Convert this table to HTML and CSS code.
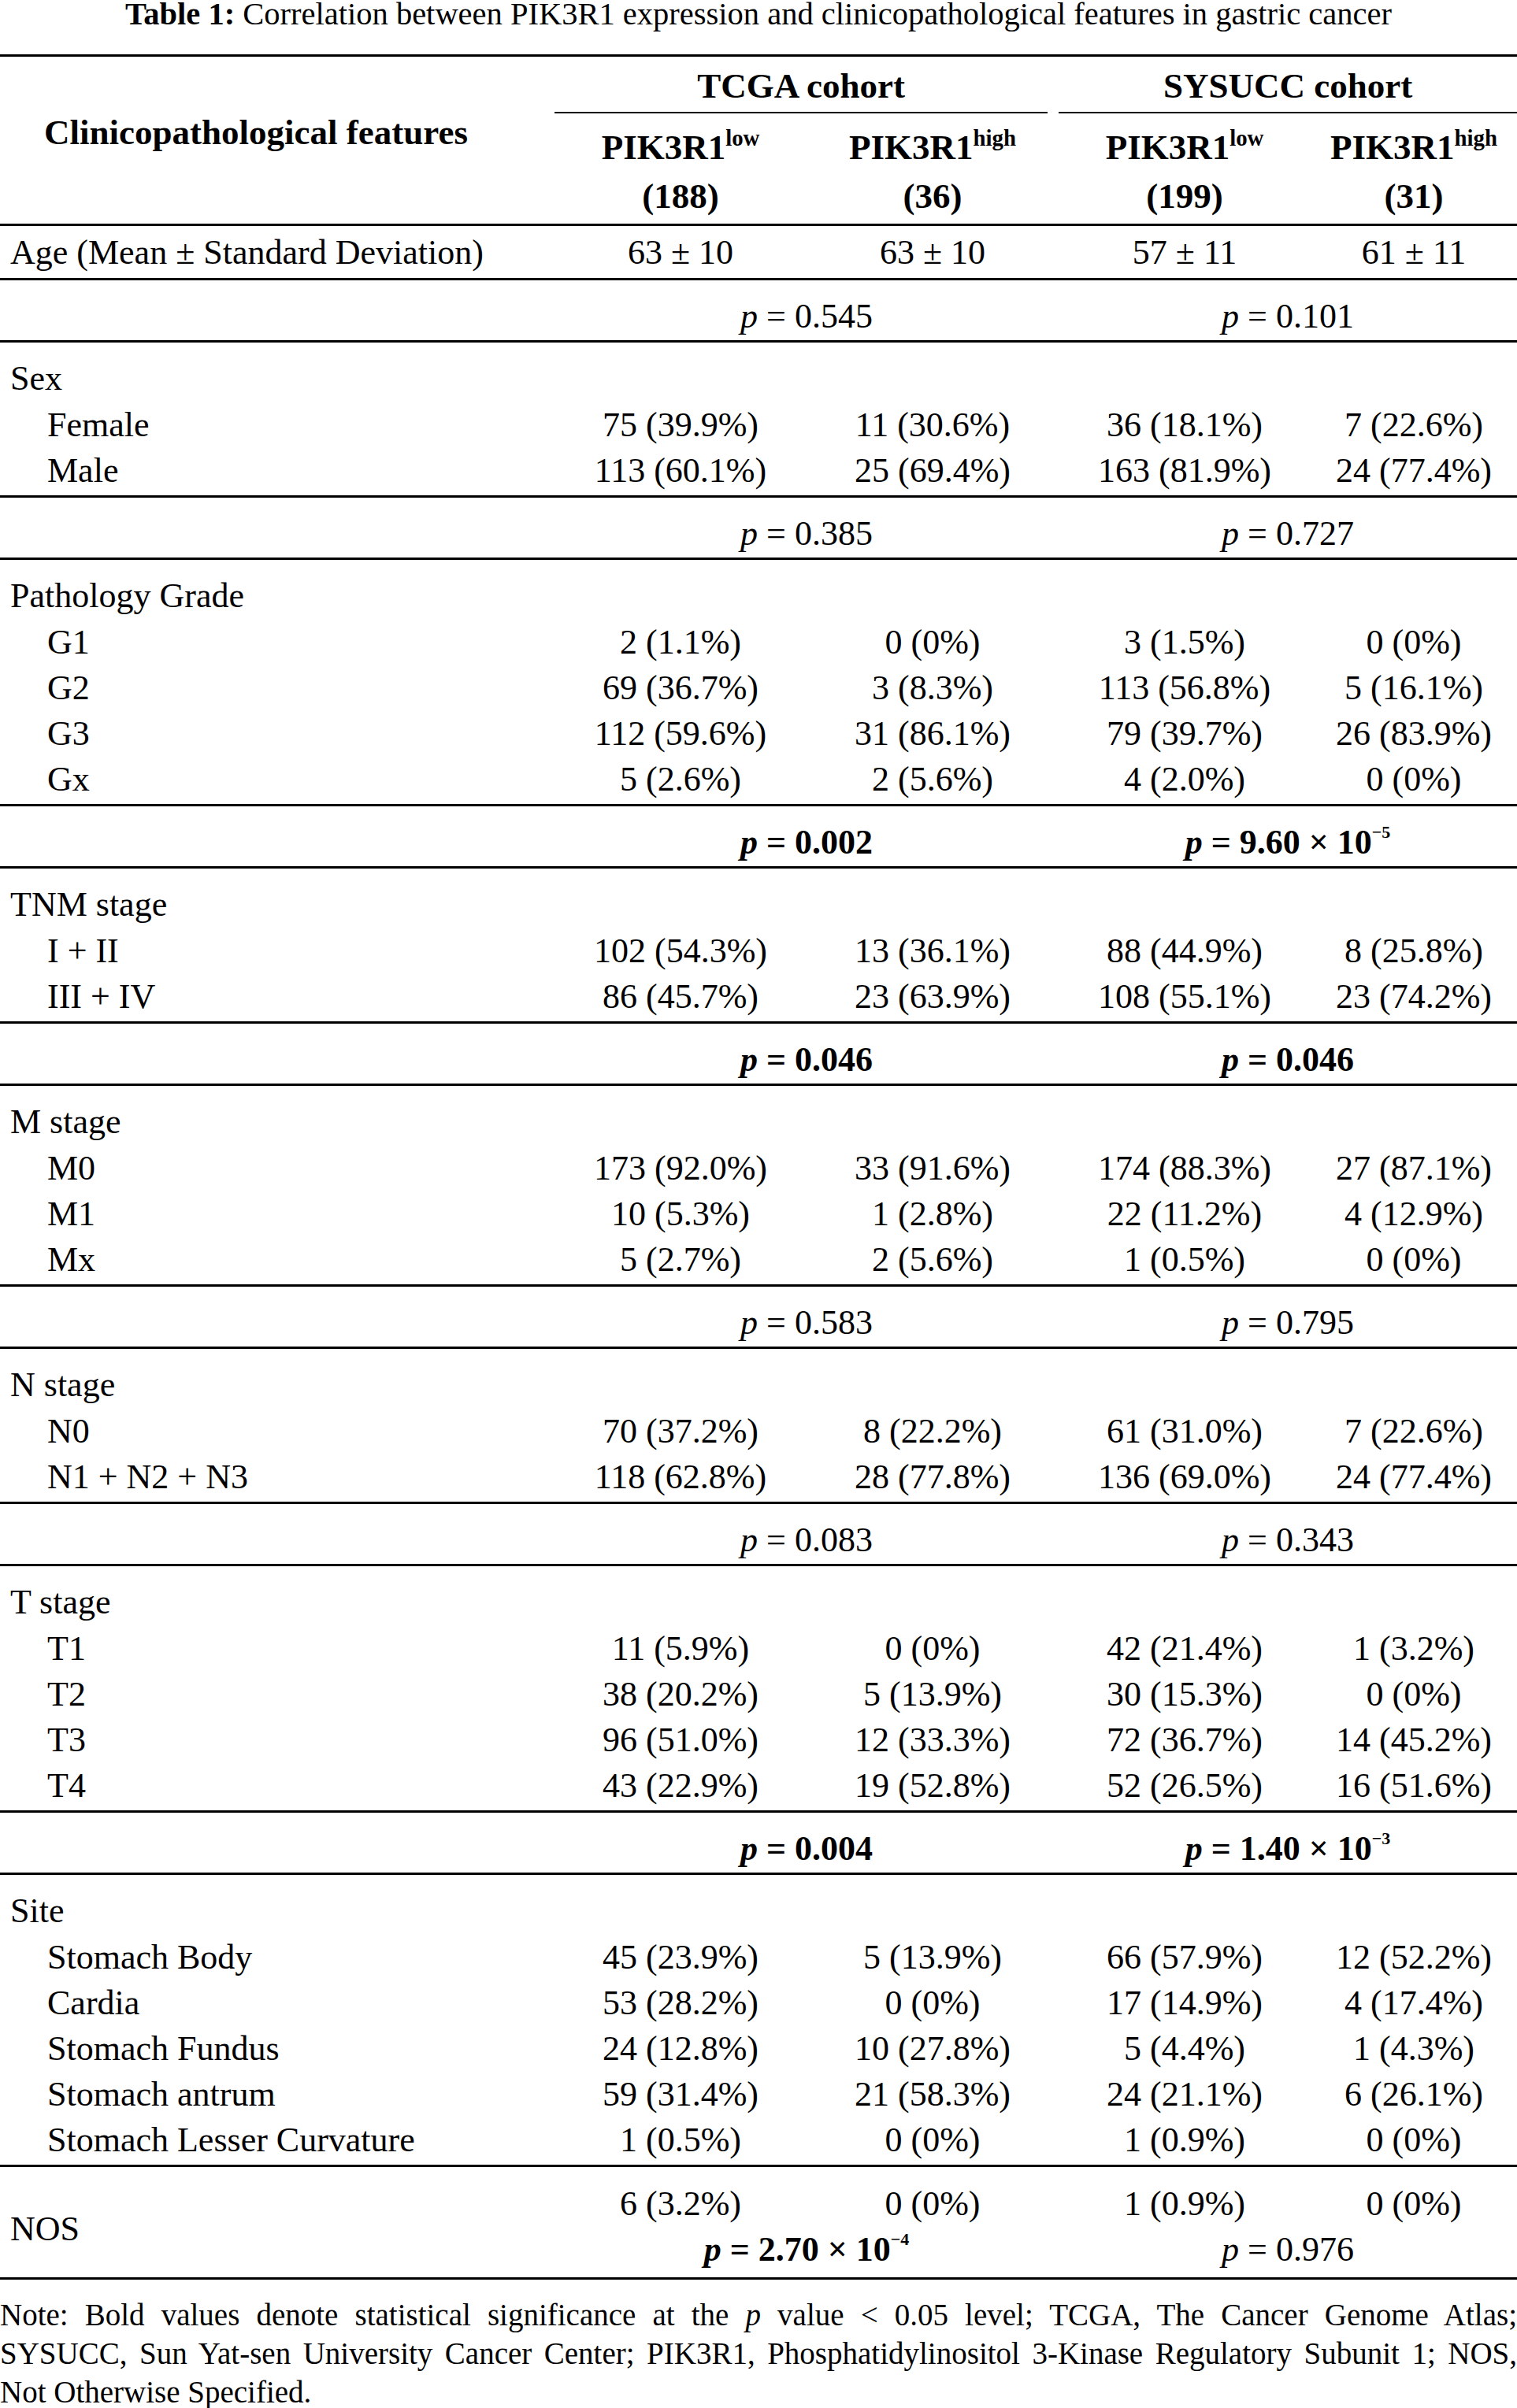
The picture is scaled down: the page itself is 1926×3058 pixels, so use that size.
FILE: index.html
```html
<!DOCTYPE html>
<html lang="en">
<head>
<meta charset="utf-8">
<title>Table 1</title>
<link rel="stylesheet" href="styles.css">
</head>
<body>
<p class="title"><b>Table 1:</b> Correlation between PIK3R1 expression and clinicopathological features in gastric cancer</p>
<table class="t">
  <colgroup>
    <col class="c-feat"><col class="c-num"><col class="c-num"><col class="c-num"><col class="c-last">
  </colgroup>
  <thead>
    <tr class="h1">
      <th rowspan="2" class="feat">Clinicopathological features</th>
      <th colspan="2" class="cohort"><div class="cline tcga">TCGA cohort</div></th>
      <th colspan="2" class="cohort"><div class="cline sys">SYSUCC cohort</div></th>
    </tr>
    <tr class="h2">
      <th>PIK3R1<sup>low</sup><br>(188)</th>
      <th>PIK3R1<sup>high</sup><br>(36)</th>
      <th>PIK3R1<sup>low</sup><br>(199)</th>
      <th>PIK3R1<sup>high</sup><br>(31)</th>
    </tr>
  </thead>
  <tbody class="age">
    <tr><td class="lab">Age (Mean ± Standard Deviation)</td><td>63 ± 10</td><td>63 ± 10</td><td>57 ± 11</td><td>61 ± 11</td></tr>
  </tbody>
  <tbody class="pv">
    <tr><td></td><td colspan="2"><i>p</i> = 0.545</td><td colspan="2"><i>p</i> = 0.101</td></tr>
  </tbody>
  <tbody class="grp">
    <tr class="head"><td class="lab">Sex</td><td></td><td></td><td></td><td></td></tr>
    <tr><td class="sub">Female</td><td>75 (39.9%)</td><td>11 (30.6%)</td><td>36 (18.1%)</td><td>7 (22.6%)</td></tr>
    <tr class="end"><td class="sub">Male</td><td>113 (60.1%)</td><td>25 (69.4%)</td><td>163 (81.9%)</td><td>24 (77.4%)</td></tr>
  </tbody>
  <tbody class="pv">
    <tr><td></td><td colspan="2"><i>p</i> = 0.385</td><td colspan="2"><i>p</i> = 0.727</td></tr>
  </tbody>
  <tbody class="grp">
    <tr class="head"><td class="lab">Pathology Grade</td><td></td><td></td><td></td><td></td></tr>
    <tr><td class="sub">G1</td><td>2 (1.1%)</td><td>0 (0%)</td><td>3 (1.5%)</td><td>0 (0%)</td></tr>
    <tr><td class="sub">G2</td><td>69 (36.7%)</td><td>3 (8.3%)</td><td>113 (56.8%)</td><td>5 (16.1%)</td></tr>
    <tr><td class="sub">G3</td><td>112 (59.6%)</td><td>31 (86.1%)</td><td>79 (39.7%)</td><td>26 (83.9%)</td></tr>
    <tr class="end"><td class="sub">Gx</td><td>5 (2.6%)</td><td>2 (5.6%)</td><td>4 (2.0%)</td><td>0 (0%)</td></tr>
  </tbody>
  <tbody class="pv">
    <tr><td></td><td colspan="2" class="sig"><i>p</i> = 0.002</td><td colspan="2" class="sig"><i>p</i> = 9.60 × 10<sup class="exp">−5</sup></td></tr>
  </tbody>
  <tbody class="grp">
    <tr class="head"><td class="lab">TNM stage</td><td></td><td></td><td></td><td></td></tr>
    <tr><td class="sub">I + II</td><td>102 (54.3%)</td><td>13 (36.1%)</td><td>88 (44.9%)</td><td>8 (25.8%)</td></tr>
    <tr class="end"><td class="sub">III + IV</td><td>86 (45.7%)</td><td>23 (63.9%)</td><td>108 (55.1%)</td><td>23 (74.2%)</td></tr>
  </tbody>
  <tbody class="pv">
    <tr><td></td><td colspan="2" class="sig"><i>p</i> = 0.046</td><td colspan="2" class="sig"><i>p</i> = 0.046</td></tr>
  </tbody>
  <tbody class="grp">
    <tr class="head"><td class="lab">M stage</td><td></td><td></td><td></td><td></td></tr>
    <tr><td class="sub">M0</td><td>173 (92.0%)</td><td>33 (91.6%)</td><td>174 (88.3%)</td><td>27 (87.1%)</td></tr>
    <tr><td class="sub">M1</td><td>10 (5.3%)</td><td>1 (2.8%)</td><td>22 (11.2%)</td><td>4 (12.9%)</td></tr>
    <tr class="end"><td class="sub">Mx</td><td>5 (2.7%)</td><td>2 (5.6%)</td><td>1 (0.5%)</td><td>0 (0%)</td></tr>
  </tbody>
  <tbody class="pv">
    <tr><td></td><td colspan="2"><i>p</i> = 0.583</td><td colspan="2"><i>p</i> = 0.795</td></tr>
  </tbody>
  <tbody class="grp">
    <tr class="head"><td class="lab">N stage</td><td></td><td></td><td></td><td></td></tr>
    <tr><td class="sub">N0</td><td>70 (37.2%)</td><td>8 (22.2%)</td><td>61 (31.0%)</td><td>7 (22.6%)</td></tr>
    <tr class="end"><td class="sub">N1 + N2 + N3</td><td>118 (62.8%)</td><td>28 (77.8%)</td><td>136 (69.0%)</td><td>24 (77.4%)</td></tr>
  </tbody>
  <tbody class="pv">
    <tr><td></td><td colspan="2"><i>p</i> = 0.083</td><td colspan="2"><i>p</i> = 0.343</td></tr>
  </tbody>
  <tbody class="grp">
    <tr class="head"><td class="lab">T stage</td><td></td><td></td><td></td><td></td></tr>
    <tr><td class="sub">T1</td><td>11 (5.9%)</td><td>0 (0%)</td><td>42 (21.4%)</td><td>1 (3.2%)</td></tr>
    <tr><td class="sub">T2</td><td>38 (20.2%)</td><td>5 (13.9%)</td><td>30 (15.3%)</td><td>0 (0%)</td></tr>
    <tr><td class="sub">T3</td><td>96 (51.0%)</td><td>12 (33.3%)</td><td>72 (36.7%)</td><td>14 (45.2%)</td></tr>
    <tr class="end"><td class="sub">T4</td><td>43 (22.9%)</td><td>19 (52.8%)</td><td>52 (26.5%)</td><td>16 (51.6%)</td></tr>
  </tbody>
  <tbody class="pv">
    <tr><td></td><td colspan="2" class="sig"><i>p</i> = 0.004</td><td colspan="2" class="sig"><i>p</i> = 1.40 × 10<sup class="exp">−3</sup></td></tr>
  </tbody>
  <tbody class="grp">
    <tr class="head"><td class="lab">Site</td><td></td><td></td><td></td><td></td></tr>
    <tr><td class="sub">Stomach Body</td><td>45 (23.9%)</td><td>5 (13.9%)</td><td>66 (57.9%)</td><td>12 (52.2%)</td></tr>
    <tr><td class="sub">Cardia</td><td>53 (28.2%)</td><td>0 (0%)</td><td>17 (14.9%)</td><td>4 (17.4%)</td></tr>
    <tr><td class="sub">Stomach Fundus</td><td>24 (12.8%)</td><td>10 (27.8%)</td><td>5 (4.4%)</td><td>1 (4.3%)</td></tr>
    <tr><td class="sub">Stomach antrum</td><td>59 (31.4%)</td><td>21 (58.3%)</td><td>24 (21.1%)</td><td>6 (26.1%)</td></tr>
    <tr class="end"><td class="sub">Stomach Lesser Curvature</td><td>1 (0.5%)</td><td>0 (0%)</td><td>1 (0.9%)</td><td>0 (0%)</td></tr>
  </tbody>
  <tbody class="nos">
    <tr class="n1"><td rowspan="2" class="lab">NOS</td><td>6 (3.2%)</td><td>0 (0%)</td><td>1 (0.9%)</td><td>0 (0%)</td></tr>
    <tr class="n2"><td colspan="2" class="sig"><i>p</i> = 2.70 × 10<sup class="exp">−4</sup></td><td colspan="2"><i>p</i> = 0.976</td></tr>
  </tbody>
</table>
<div class="note">
  <span class="nl">Note: Bold values denote statistical significance at the <i>p</i> value &lt; 0.05 level; TCGA, The Cancer Genome Atlas;</span>
  <span class="nl">SYSUCC, Sun Yat-sen University Cancer Center; PIK3R1, Phosphatidylinositol 3-Kinase Regulatory Subunit 1; NOS,</span>
  <span class="nl last">Not Otherwise Specified.</span>
</div>
</body>
</html>
```

FILE: styles.css
```css
html, body {
  margin: 0;
  padding: 0;
  background: #fff;
}

body {
  width: 1926px;
  font-family: "Liberation Serif", "Times New Roman", serif;
  color: #000;
}

.title {
  margin: 0 0 33px;
  font-size: 40.5px;
  line-height: 36px;
  text-align: center;
}

.t {
  width: 1926px;
  border-collapse: collapse;
  table-layout: fixed;
  font-size: 44px;
}

.c-feat { width: 704px; }
.c-num { width: 320px; }
.c-last { width: 262px; }

.t th, .t td {
  padding: 0;
  line-height: 58px;
  text-align: center;
  white-space: nowrap;
}

.t thead {
  border-top: 3px solid #000;
  border-bottom: 3px solid #000;
}

.t th {
  font-weight: bold;
  font-size: 45px;
}

.t th.feat {
  text-align: left;
  padding-left: 56px;
  padding-bottom: 20px;
  vertical-align: middle;
}

.h1 th.cohort {
  padding-top: 8px;
}

.cline {
  padding-bottom: 4px;
  border-bottom: 2px solid #000;
}

.cline.tcga { margin-right: 14px; }

.h2 th {
  padding-top: 12px;
  padding-bottom: 4px;
  line-height: 62px;
  vertical-align: top;
}

.t sup {
  font-size: 0.64em;
  line-height: 0;
  vertical-align: 0.6em;
}

.t sup.exp {
  font-size: 0.5em;
  vertical-align: 0.9em;
}

.t tbody {
  border-top: 3px solid #000;
}

.t tbody.nos {
  border-bottom: 3px solid #000;
}

.t td.lab {
  text-align: left;
  padding-left: 13px;
}

.t td.sub {
  text-align: left;
  padding-left: 60px;
}

.age td {
  padding-top: 5px;
  padding-bottom: 3px;
}

.pv td {
  padding-top: 17px;
  padding-bottom: 1px;
}

.grp tr.head td {
  padding-top: 16px;
  line-height: 60px;
}

.grp tr.end td {
  padding-bottom: 2px;
}

.nos tr.n1 td {
  padding-top: 18px;
}

.nos tr.n2 td {
  padding-bottom: 6px;
}

.nos td.lab {
  vertical-align: middle;
}

.t td.sig {
  font-weight: bold;
}

.note {
  margin-top: 20px;
  font-size: 39px;
  line-height: 49px;
}

.nl {
  display: block;
  text-align: justify;
  text-align-last: justify;
}

.nl.last {
  text-align-last: left;
}
```
